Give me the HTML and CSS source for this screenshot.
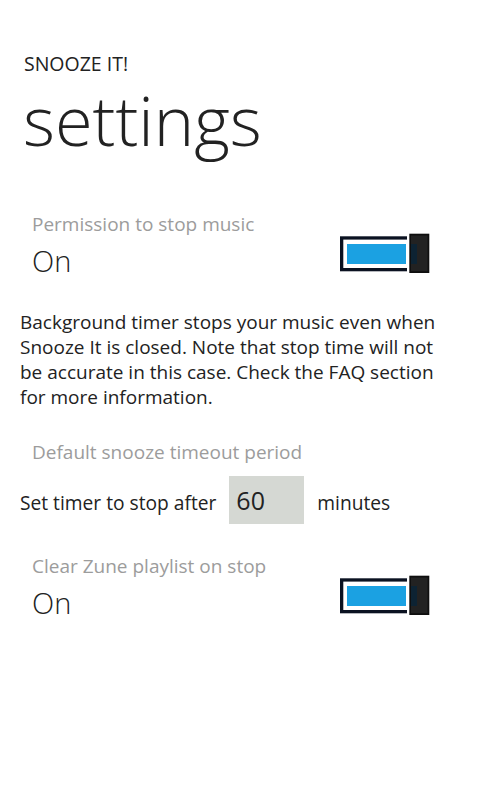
FILE: index.html
```html
<!DOCTYPE html>
<html lang="en">
<head>
<meta charset="utf-8">
<title>Snooze It! settings</title>
<link rel="stylesheet" href="styles.css">
</head>
<body>
<div class="page">
  <header class="header">
    <div class="app-title">SNOOZE IT!</div>
    <h1 class="page-title">settings</h1>
  </header>

  <section class="toggle-setting">
    <div class="label">Permission to stop music</div>
    <div class="toggle-row">
      <span class="toggle-state">On</span>
      <svg class="toggle" width="90" height="41" viewBox="0 0 90 41" aria-hidden="true">
        <rect x="0" y="3.3" width="67" height="35" fill="#0b1221"/>
        <rect x="3.3" y="6.6" width="63.7" height="28.4" fill="#ffffff"/>
        <rect x="7" y="11" width="59" height="20" fill="#1ba1e2"/>
        <rect x="69.3" y="0.7" width="20" height="39.3" fill="#0f0f0f"/>
        <rect x="71" y="2.5" width="16.6" height="35.7" fill="#222222"/>
        <rect x="71" y="11" width="6" height="20" fill="#0d2333"/>
      </svg>
    </div>
  </section>

  <p class="note">Background timer stops your music even when Snooze It is closed. Note that stop time will not be accurate in this case. Check the FAQ section for more information.</p>

  <section class="timeout">
    <div class="label">Default snooze timeout period</div>
    <div class="timer-row">
      <span class="timer-text">Set timer to stop after</span>
      <span class="timer-box">60</span>
      <span class="timer-text">minutes</span>
    </div>
  </section>

  <section class="toggle-setting clear">
    <div class="label">Clear Zune playlist on stop</div>
    <div class="toggle-row">
      <span class="toggle-state">On</span>
      <svg class="toggle" width="90" height="41" viewBox="0 0 90 41" aria-hidden="true">
        <rect x="0" y="3.3" width="67" height="35" fill="#0b1221"/>
        <rect x="3.3" y="6.6" width="63.7" height="28.4" fill="#ffffff"/>
        <rect x="7" y="11" width="59" height="20" fill="#1ba1e2"/>
        <rect x="69.3" y="0.7" width="20" height="39.3" fill="#0f0f0f"/>
        <rect x="71" y="2.5" width="16.6" height="35.7" fill="#222222"/>
        <rect x="71" y="11" width="6" height="20" fill="#0d2333"/>
      </svg>
    </div>
  </section>
</div>
</body>
</html>
```

FILE: styles.css
```css
html, body {
  margin: 0;
  padding: 0;
  background: #ffffff;
}

body {
  width: 486px;
  height: 810px;
  overflow: hidden;
  font-family: "Open Sans", "Noto Sans", sans-serif;
  color: #222222;
}

.header {
  padding-top: 53px;
}

.app-title {
  margin-left: 24px;
  font-size: 19.5px;
  line-height: 22px;
  font-weight: 400;
}

.page-title {
  margin: 5px 0 0 23px;
  font-size: 68.5px;
  line-height: 80px;
  font-weight: 300;
}

.label {
  font-size: 19px;
  line-height: 20px;
  color: #9c9c9c;
}

.toggle-setting {
  margin-top: 54px;
  padding: 0 56px 0 32px;
}

.toggle-setting.clear {
  margin-top: 32px;
}

.toggle-row {
  display: flex;
  justify-content: space-between;
  align-items: flex-start;
}

.toggle-state {
  font-size: 29px;
  line-height: 54px;
  font-weight: 300;
}

.toggle {
  display: block;
  flex: none;
  margin-top: -1px;
}

.note {
  margin: 22px 0 0 20px;
  width: 440px;
  font-size: 19px;
  line-height: 25px;
}

.timeout {
  margin-top: 32px;
}

.timeout .label {
  margin-left: 32px;
}

.timer-row {
  display: flex;
  align-items: baseline;
  margin: 14px 0 0 20px;
}

.timer-text {
  font-size: 19.2px;
}

.timer-box {
  width: 75px;
  box-sizing: border-box;
  margin: 0 13px 0 13px;
  padding-left: 7px;
  background: #d5d8d3;
  font-size: 25px;
  line-height: 48px;
}
```
